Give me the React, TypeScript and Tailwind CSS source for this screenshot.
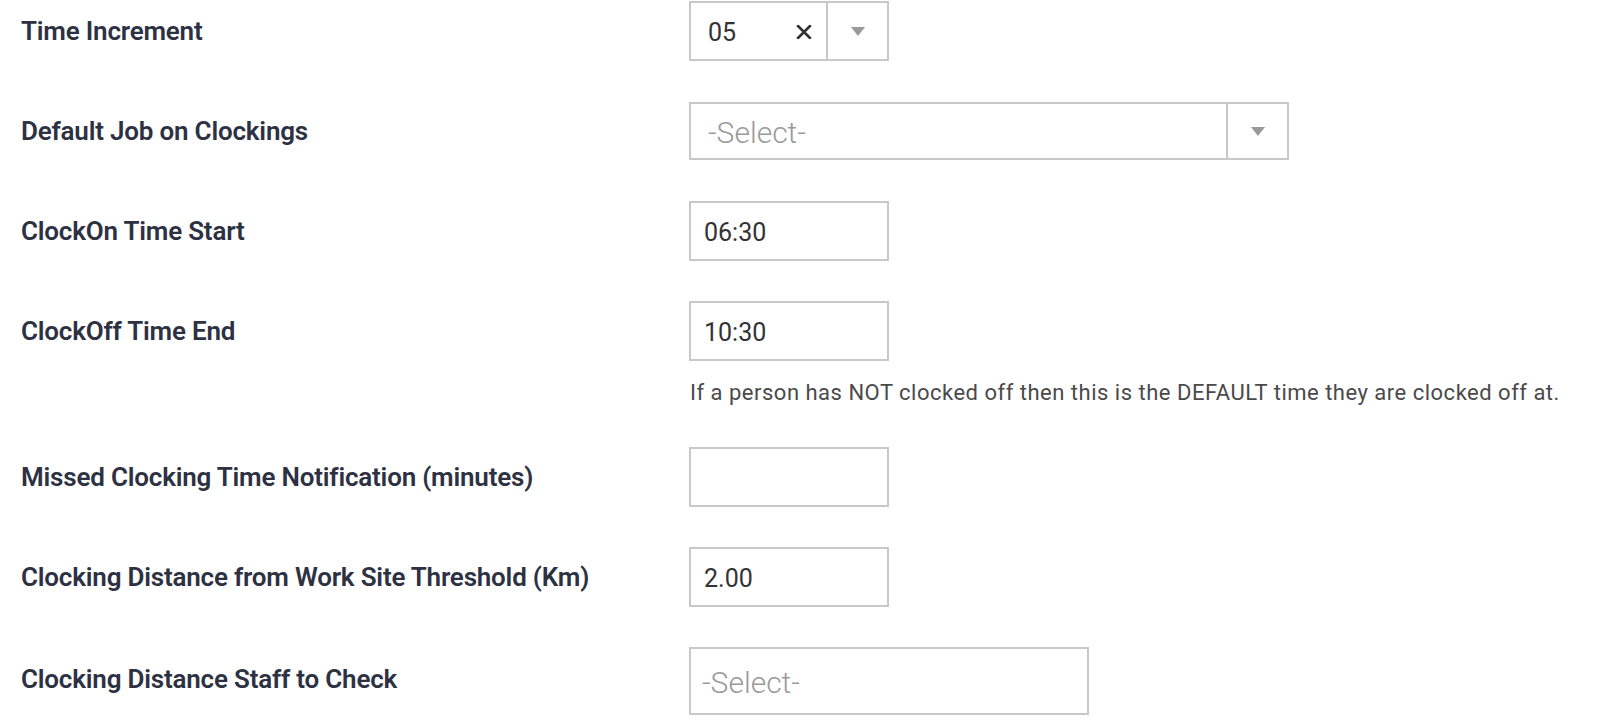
import React from 'react'

const labelCls =
  "h-[60px] flex items-center text-[26px] font-semibold text-[#2d3142] font-['Roboto',sans-serif] tracking-[-0.2px]"
const boxCls = 'border-2 border-[#c8c8c8] bg-white'
const valueCls = "text-[25px] text-[#333] font-['Roboto',sans-serif] pt-[4px]"
const placeholderCls = "text-[30px] text-[#9a9a9a] font-['Roboto',sans-serif] font-light pt-[3px]"

function Caret() {
  return (
    <svg width="14" height="9" viewBox="0 0 14 9">
      <polygon points="0,0 14,0 7,9" fill="#999" />
    </svg>
  )
}

function Clear() {
  return (
    <svg width="16" height="14" viewBox="0 0 16 14" className="mt-[2px]">
      <path d="M2 1 L14 13 M14 1 L2 13" stroke="#333" strokeWidth="2.6" strokeLinecap="round" />
    </svg>
  )
}

function TextBox({ value }: { value?: string }) {
  return (
    <div className={`${boxCls} w-[200px] h-[60px] flex items-center pl-[13px]`}>
      <span className={valueCls}>{value}</span>
    </div>
  )
}

function Row({ label, children, h = 'h-[60px]' }: { label: string; children: React.ReactNode; h?: string }) {
  return (
    <div className="grid grid-cols-[668px_1fr]">
      <div className={`${labelCls} ${h}`}>{label}</div>
      <div>{children}</div>
    </div>
  )
}

export default function App() {
  return (
    <div className="w-[1620px] h-[728px] bg-white pl-[21px] pt-px flex flex-col gap-[40px]">
      <Row label="Time Increment">
        <div className={`${boxCls} w-[200px] h-[60px] flex`}>
          <div className="flex-1 flex items-center justify-between pl-[17px] pr-[14px] border-r-2 border-[#c8c8c8]">
            <span className={valueCls}>05</span>
            <Clear />
          </div>
          <div className="w-[59px] flex items-center justify-center">
            <Caret />
          </div>
        </div>
      </Row>

      <Row label="Default Job on Clockings">
        <div className={`${boxCls} w-[600px] h-[58px] mt-px flex`}>
          <div className="flex-1 flex items-center pl-[17px] border-r-2 border-[#c8c8c8]">
            <span className={placeholderCls}>-Select-</span>
          </div>
          <div className="w-[59px] flex items-center justify-center">
            <Caret />
          </div>
        </div>
      </Row>

      <Row label="ClockOn Time Start">
        <TextBox value="06:30" />
      </Row>

      <div className="grid grid-cols-[668px_1fr]">
        <div className={labelCls}>ClockOff Time End</div>
        <div>
          <TextBox value="10:30" />
          <p className="mt-[17px] leading-[29px] text-[22px] tracking-[0.5px] text-[#4a4a4a] font-['Roboto',sans-serif] pl-px">
            If a person has NOT clocked off then this is the DEFAULT time they are clocked off at.
          </p>
        </div>
      </div>

      <Row label="Missed Clocking Time Notification (minutes)">
        <TextBox />
      </Row>

      <Row label="Clocking Distance from Work Site Threshold (Km)">
        <TextBox value="2.00" />
      </Row>

      <Row label="Clocking Distance Staff to Check" h="h-[64px]">
        <div className={`${boxCls} w-[400px] h-[68px] flex items-center pl-[11px]`}>
          <span className={placeholderCls}>-Select-</span>
        </div>
      </Row>
    </div>
  )
}
